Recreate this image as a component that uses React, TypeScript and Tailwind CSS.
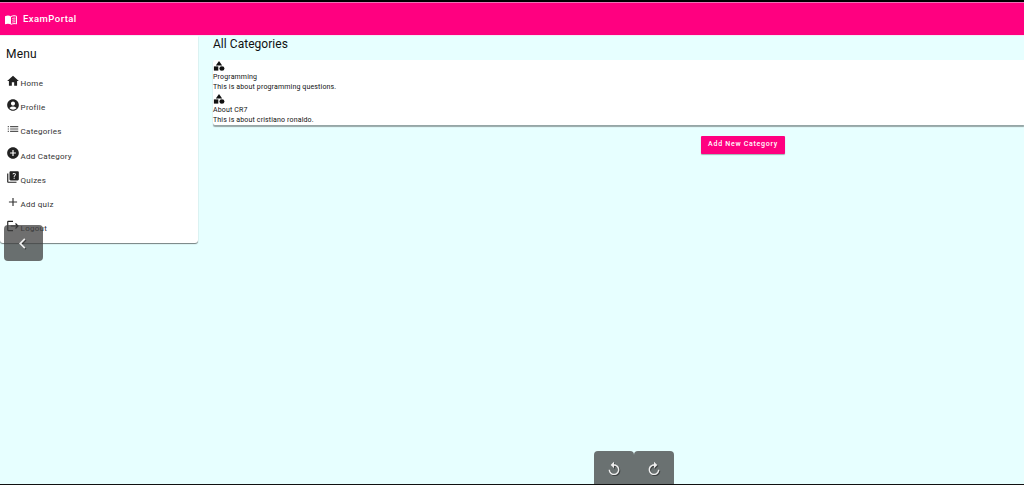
import type { ComponentType } from "react";
import {
  MdAccountCircle,
  MdAdd,
  MdAddCircle,
  MdChevronLeft,
  MdHome,
  MdList,
  MdLogout,
  MdQuiz,
  MdReplay,
} from "react-icons/md";

type Icon = ComponentType<{ className?: string }>;

const menu: { label: string; icon: Icon; tone: string }[] = [
  { label: "Home", icon: MdHome, tone: "text-[#222]" },
  { label: "Profile", icon: MdAccountCircle, tone: "text-[#222]" },
  { label: "Categories", icon: MdList, tone: "text-[#555]" },
  { label: "Add Category", icon: MdAddCircle, tone: "text-[#222]" },
  { label: "Quizes", icon: MdQuiz, tone: "text-[#222]" },
  { label: "Add quiz", icon: MdAdd, tone: "text-[#333]" },
  { label: "Logout", icon: MdLogout, tone: "text-[#222]" },
];

const categories = [
  { title: "Programming", text: "This is about programming questions." },
  { title: "About CR7", text: "This is about cristiano ronaldo." },
];

function BookLogo() {
  return (
    <svg viewBox="0 0 12 10" className="mt-px h-[10px] w-[12px]" fill="none">
      <path d="M0 1.2C2 .3 4.300.3 6 1.400V9.400C4.300 8.500 2 8.500 0 9.200Z" fill="currentColor" />
      <path d="M6 1.500C8 .500 10 .600 11.500 1.200V8.900C10 8.400 8 8.500 6 9.300" stroke="currentColor" />
      <path d="M7.300 3.500C8.500 3 9.500 3 10.500 3.200M7.300 5.300C8.500 4.900 9.500 4.900 10.500 5.100M7.300 7.100C8.500 6.700 9.500 6.700 10.500 6.900" stroke="currentColor" strokeWidth=".8" />
    </svg>
  );
}

function ShapesIcon() {
  return (
    <svg viewBox="0 0 12 10" className="h-[10px] w-[12px]" fill="currentColor">
      <path d="M6 0 9.200 4.500H2.800Z" />
      <rect x=".9" y="5.400" width="4.400" height="4.200" />
      <ellipse cx="8.900" cy="7.500" rx="2.500" ry="2.200" />
    </svg>
  );
}

function Sidebar() {
  return (
    <aside className="h-[207px] w-[198px] shrink-0 rounded-b-[3px] bg-white pl-[6px] pt-[9px] shadow-[0_1px_1px_rgba(0,0,0,0.5)]">
      <h2 className="mb-[8px] text-[12px] leading-[18px] tracking-[0.15px] text-[#111]">Menu</h2>
      <nav>
        {menu.map(({ label, icon: ItemIcon, tone }) => (
          <a key={label} className="flex h-[24.2px] items-center">
            <ItemIcon className={`mb-[5px] size-[14px] shrink-0 ${tone}`} />
            <span className="ml-[0.6px] mt-[2px] whitespace-nowrap text-[8px] leading-[12px] tracking-[0.25px] text-[#333]">
              {label}
            </span>
          </a>
        ))}
      </nav>
    </aside>
  );
}

export default function App() {
  return (
    <div className="relative flex h-[485px] w-full flex-col overflow-hidden border-b border-t-2 border-b-[#111] border-t-black bg-[#e7ffff] font-['Roboto',sans-serif]">
      <header className="flex h-[33px] shrink-0 items-center border-t border-[#ee70b5] bg-[#ff0080] pl-[5px] text-white">
        <BookLogo />
        <span className="ml-[6px] mt-px text-[9.5px] font-medium tracking-[0.45px]">ExamPortal</span>
      </header>
      <div className="flex flex-1 border-t border-[#f2eaf3]">
        <Sidebar />
        <main className="ml-[15px] flex min-w-0 flex-1 flex-col">
          <h1 className="h-[24px] pt-px text-[12px] leading-[15px] tracking-[0.04px] text-[#111]">All Categories</h1>
          <section className="h-[65px] rounded-l-[2px] bg-white shadow-[0_1.5px_1px_rgba(0,0,0,0.35)]">
            {categories.map(({ title, text }) => (
              <article key={title} className="h-[32.5px] whitespace-nowrap pt-[1px] text-[7px] leading-[10px] tracking-[0.15px] text-[#111]">
                <ShapesIcon />
                <p className="mt-px">{title}</p>
                <p>{text}</p>
              </article>
            ))}
          </section>
          <button className="ml-[488px] mt-[10.5px] h-[18px] w-[84px] rounded-[1px] bg-[#ff0080] text-[7px] font-medium tracking-[0.72px] whitespace-nowrap text-white shadow-[0_1px_1px_rgba(0,0,0,0.3)]">
            Add New Category
          </button>
        </main>
      </div>
      <button className="absolute left-[4px] top-[223px] flex h-[36px] w-[39px] items-center justify-center rounded-[4px] bg-[#3f3f3f]/75 text-[#eee]">
        <MdChevronLeft className="mr-[3px] size-[21px] drop-shadow-[1px_1px_0_rgba(0,0,0,0.4)]" />
      </button>
      <div className="absolute bottom-0 left-[594px] flex text-[#eee]">
        <button className="flex h-[33px] w-[40px] items-center justify-center rounded-t-[4px] bg-[#6a7171]">
          <MdReplay className="mt-[3px] size-[16px] drop-shadow-[1px_1px_0_rgba(0,0,0,0.4)]" />
        </button>
        <button className="flex h-[33px] w-[40px] items-center justify-center rounded-t-[4px] bg-[#6a7171]">
          <MdReplay className="mt-[3px] mr-px size-[16px] -scale-x-100 drop-shadow-[-1px_1px_0_rgba(0,0,0,0.4)]" />
        </button>
      </div>
    </div>
  );
}
